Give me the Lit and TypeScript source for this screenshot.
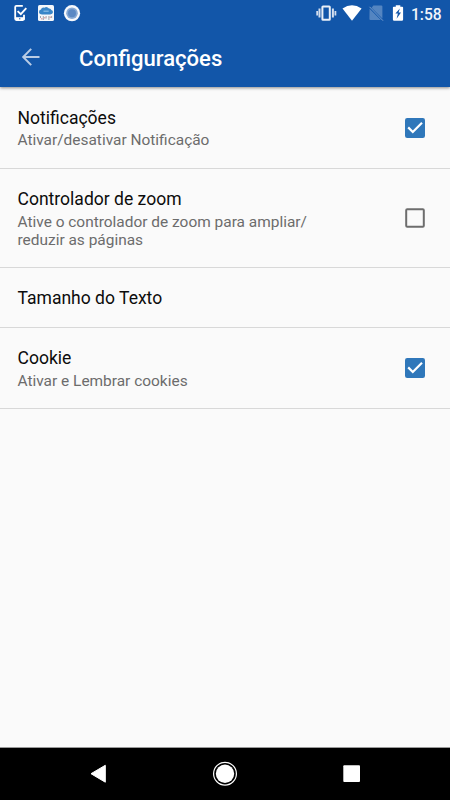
import { LitElement, html, css, svg, nothing } from "lit";
import { customElement, property } from "lit/decorators.js";

@customElement("check-box")
class CheckBox extends LitElement {
  @property({ type: Boolean }) checked = false;

  static styles = css`
    :host { display: block; width: 20px; height: 20px; }
    svg { display: block; }
  `;

  render() {
    return html`<svg width="20" height="20" viewBox="0 0 20 20">
      ${this.checked
        ? svg`<rect width="20" height="20" rx="2.2" fill="#2f77ba"/>
            <path d="M3.2 9.4L7.8 14L17 4.8" fill="none" stroke="#fff" stroke-width="2.2"/>`
        : svg`<rect x="1.2" y="1.2" width="17.6" height="17.6" rx="1" fill="none" stroke="#6d6d6d" stroke-width="2"/>`}
    </svg>`;
  }
}

@customElement("setting-row")
class SettingRow extends LitElement {
  @property() label = "";
  @property() summary = "";
  @property() state = "";

  static styles = css`
    :host {
      display: flex;
      align-items: center;
      justify-content: space-between;
      box-sizing: border-box;
      padding: 0 25px 0 17.5px;
      border-bottom: 1px solid #d8d8d8;
    }
    .text { padding-top: 2px; }
    .label { font-size: 17.55px; line-height: 21px; color: #0c0c0c; }
    .summary { font-size: 15.45px; line-height: 18px; color: #6c6c6c; white-space: pre-line; margin-top: 2.5px; }
  `;

  render() {
    return html`
      <div class="text">
        <div class="label">${this.label}</div>
        ${this.summary ? html`<div class="summary">${this.summary}</div>` : nothing}
      </div>
      ${this.state ? html`<check-box ?checked=${this.state === "on"}></check-box>` : nothing}
    `;
  }
}

@customElement("app-root")
class AppRoot extends LitElement {
  static styles = css`
    :host {
      display: flex;
      flex-direction: column;
      width: 450px;
      height: 800px;
      background: #fafafa;
      font-family: Roboto, sans-serif;
      overflow: hidden;
    }
    svg { display: block; flex: none; }
    header {
      height: 87px;
      flex: none;
      background: #1256a9;
      color: #fff;
      box-shadow: 0 1px 3px rgba(0, 0, 0, 0.45);
      z-index: 1;
    }
    .status { display: flex; justify-content: space-between; height: 27px; }
    .right { display: flex; }
    .clock { font-size: 15.6px; font-weight: 500; line-height: 28px; width: 39px; padding-top: 0.5px; color: #f1f5fa; }
    .right svg { margin-right: 1px; }
    .bar { display: flex; align-items: center; height: 61px; padding-left: 21px; }
    .bar svg { margin-bottom: 1px; }
    .title { margin-left: 38px; font-size: 22.05px; font-weight: 500; line-height: 26px; padding-top: 2px; }
    main { flex: 1; }
    .r1 { height: 82px; }
    .r2 { height: 99px; }
    .r3 { height: 60px; }
    .r4 { height: 81px; }
    nav { height: 52px; flex: none; background: #000; border-top: 1px solid #999; box-sizing: content-box; }
  `;

  render() {
    return html`
      <header>
        <div class="status">
          <svg width="100" height="27" viewBox="0 0 100 27">
            <path d="M22.8 5.9H16.4Q15.2 5.9 15.2 7.1V18.8Q15.2 20 16.4 20H22.8Q24 20 24 18.8V14.8" fill="none" stroke="#fff" stroke-width="1.8"/>
            <path d="M15 17.2H24.6V20H15z" fill="#fff"/>
            <path d="M19 18.8h1.4" stroke="#1256a9" stroke-width="1"/>
            <path d="M17.6 11.1L20.8 14.1L26.3 8.2" fill="none" stroke="#fff" stroke-width="1.9"/>
            <rect x="38" y="5" width="16" height="16" rx="1.6" fill="#f5f7fa"/>
            <path d="M42.2 14.4Q39 14.3 39 11.9Q39 10 41 9.6Q41.5 7.2 44.4 7.7Q46.9 6 49 8.6Q51 8.4 51.3 10.1Q53.1 10.6 53 12.2Q52.8 14.3 50.2 14.4z" fill="#3986c8"/>
            <path d="M43.5 11.2h5.2" stroke="#8bbde5" stroke-width="1.2"/>
            <path d="M40.5 16v2M43.3 16v4M46.1 16v2.5M48.9 16v4M51.6 16v2" stroke="#8b9098" stroke-width=".8"/>
            <path d="M41.8 18v1.5M44.8 17v1.5M50.2 16.5v1.5" stroke="#d56d72" stroke-width=".8"/>
            <circle cx="72" cy="13.2" r="8.1" fill="#f7f9fc"/>
            <circle cx="72" cy="13.2" r="5.8" fill="#88aad5"/>
            <circle cx="72" cy="13.2" r="4" fill="#5b89c4"/>
          </svg>
          <div class="right">
            <svg width="100" height="27" viewBox="310 0 100 27">
              <rect x="322.4" y="6.4" width="7.4" height="13.4" rx=".6" fill="none" stroke="#e9eff7" stroke-width="2"/>
              <path d="M319.5 8.6v9M332.9 8.6v9" stroke="#d3deee" stroke-width="2"/>
              <path d="M317.2 11v4.6M335.4 11v4.6" stroke="#d3deee" stroke-width="1.8"/>
              <path d="M342.5 8.4Q352 2 361.6 8.4L352 20.8z" fill="#fff"/>
              <path d="M373.4 5.6H381.4Q382.4 5.6 382.4 6.6V18.4L371.6 7.7zM369.6 8.7L380.8 20H370.4Q369.4 20 369.4 19z" fill="#5485c1"/>
              <path d="M369.5 6.8L383 20.7" stroke="#799fcf" stroke-width="1"/>
              <path d="M395.8 5.2h4.5v1.5h1.9q.9 0 .9.9v12q0 1.2-1.2 1.2h-7.8q-1.2 0-1.2-1.2v-12q0-.9.9-.9h2z" fill="#fff"/>
              <path d="M399.8 8.4L395.4 13.6H397.9L396.6 18.8L401 12.5H398.6z" fill="#1256a9"/>
            </svg>
            <div class="clock">1:58</div>
          </div>
        </div>
        <div class="bar">
          <svg width="20" height="20" viewBox="0 0 20 20"><path d="M18.5 10H2M10.2 1.9L2.2 10L10.2 18.1" fill="none" stroke="#b9cce5" stroke-width="2"/></svg>
          <div class="title">Configurações</div>
        </div>
      </header>
      <main>
        <setting-row class="r1" label="Notificações" summary="Ativar/desativar Notificação" state="on"></setting-row>
        <setting-row class="r2" label="Controlador de zoom" .summary=${"Ative o controlador de zoom para ampliar/\nreduzir as páginas"} state="off"></setting-row>
        <setting-row class="r3" label="Tamanho do Texto"></setting-row>
        <setting-row class="r4" label="Cookie" summary="Ativar e Lembrar cookies" state="on"></setting-row>
      </main>
      <nav>
        <svg width="450" height="52" viewBox="0 748 450 52">
          <path d="M91 773.7L105.3 765.3V782.2z" fill="#fff" stroke="#fff" stroke-width="1" stroke-linejoin="round"/>
          <circle cx="225" cy="773.7" r="11.4" fill="none" stroke="#fff" stroke-width="1.2"/>
          <circle cx="225" cy="773.7" r="9.2" fill="#fff"/>
          <rect x="343.3" y="765.3" width="16.7" height="16.7" rx=".9" fill="#fff"/>
        </svg>
      </nav>
    `;
  }
}
